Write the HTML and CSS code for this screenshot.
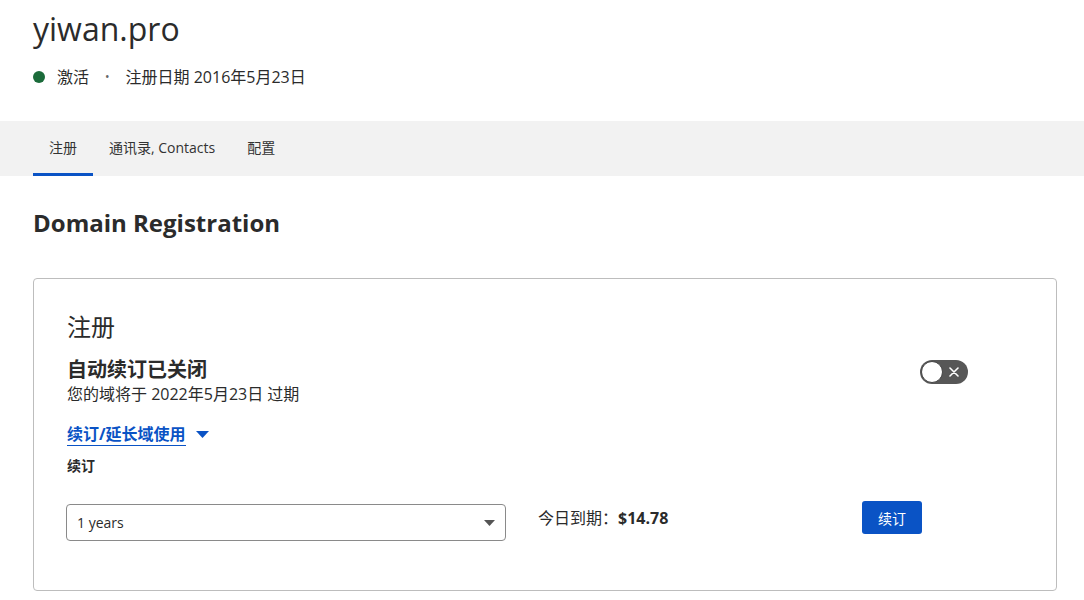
FILE: index.html
```html
<!DOCTYPE html>
<html lang="zh-CN">
<head>
    <meta charset="utf-8">
    <title>yiwan.pro</title>
    <link rel="stylesheet" href="styles.css">
</head>
<body>
    <header class="domain-header">
        <h1 class="domain-name">yiwan.pro</h1>
        <div class="status-row">
            <span class="status-dot"></span>
            <span>激活</span>
            <span class="status-sep">•</span>
            <span>注册日期 2016年5月23日</span>
        </div>
    </header>

    <nav class="tabs">
        <a class="tab active" href="#">注册</a>
        <a class="tab" href="#">通讯录, Contacts</a>
        <a class="tab" href="#">配置</a>
    </nav>

    <main class="content">
        <h2 class="section-title">Domain Registration</h2>

        <section class="card">
            <h3 class="card-title">注册</h3>

            <div class="renew-status">
                <div>
                    <div class="renew-heading">自动续订已关闭</div>
                    <div class="renew-desc">您的域将于 2022年5月23日 过期</div>
                </div>
                <button class="toggle" type="button" aria-label="自动续订">
                    <span class="toggle-knob"></span>
                    <svg class="toggle-x" width="10" height="10" viewBox="0 0 10 10">
                        <path d="M1 1L9 9M9 1L1 9" stroke="#fff" stroke-width="1.6" stroke-linecap="round"/>
                    </svg>
                </button>
            </div>

            <a class="extend-link" href="#">
                <span class="extend-text">续订/延长域使用</span>
                <svg class="extend-caret" width="13" height="7" viewBox="0 0 13 7">
                    <path d="M0 0H13L6.5 7Z" fill="#0a53c5"/>
                </svg>
            </a>

            <div class="field-label">续订</div>

            <div class="renew-row">
                <div class="select-box">
                    <span>1 years</span>
                    <svg width="11" height="6" viewBox="0 0 11 6">
                        <path d="M0 0H11L5.5 6Z" fill="#555"/>
                    </svg>
                </div>
                <div class="price">今日到期：<strong>$14.78</strong></div>
                <button class="btn-primary" type="button">续订</button>
            </div>
        </section>
    </main>
</body>
</html>
```

FILE: styles.css
```css
body {
    margin: 0;
    font-family: "Open Sans", "Noto Sans CJK SC", sans-serif;
    font-size: 16px;
    color: #2b2b2b;
    background: #fff;
}

.domain-header {
    padding: 7px 33px 0;
}

.domain-name {
    margin: 0;
    font-size: 32px;
    font-weight: 400;
    line-height: 44px;
}

.status-row {
    display: flex;
    align-items: center;
    margin-top: 14px;
    line-height: 24px;
}

.status-dot {
    width: 12px;
    height: 12px;
    border-radius: 50%;
    background-color: #1b6b3a;
    margin-right: 12px;
}

.status-sep {
    margin: 0 16px 0 16px;
    font-size: 12px;
    color: #666;
}

.tabs {
    display: flex;
    margin-top: 32px;
    padding-left: 33px;
    height: 55px;
    background-color: #f2f2f2;
}

.tab {
    display: flex;
    align-items: center;
    padding: 0 16px;
    font-size: 14px;
    color: #333;
    text-decoration: none;
    border-bottom: 3px solid transparent;
    padding-top: 0;
}

.tab.active {
    border-bottom-color: #0a53c5;
}

.content {
    padding: 0 27px 0 33px;
}

.section-title {
    margin: 30px 0 0;
    font-size: 24px;
    font-weight: 700;
    line-height: 34px;
}

.card {
    margin-top: 38px;
    border: 1px solid #bdbdbd;
    border-radius: 4px;
    padding: 32px 88px 49px 33px;
}

.card-title {
    margin: 0;
    font-size: 24px;
    font-weight: 400;
    line-height: 32px;
}

.renew-status {
    display: flex;
    justify-content: space-between;
    align-items: flex-start;
    margin-top: 13px;
}

.renew-heading {
    font-size: 20px;
    font-weight: 700;
    line-height: 28px;
}

.renew-desc {
    line-height: 20px;
}

.toggle {
    position: relative;
    width: 48px;
    height: 24px;
    margin-top: 4px;
    padding: 0;
    border: none;
    border-radius: 12px;
    background-color: #575757;
    cursor: pointer;
}

.toggle-knob {
    position: absolute;
    left: 1px;
    top: 1px;
    width: 20px;
    height: 20px;
    border-radius: 50%;
    background-color: #fff;
    border: 1px solid #444;
}

.toggle-x {
    position: absolute;
    right: 9px;
    top: 7px;
}

.extend-link {
    display: inline-flex;
    align-items: center;
    margin-top: 19px;
    text-decoration: none;
    color: #0a53c5;
    font-weight: 700;
    line-height: 24px;
}

.extend-text {
    border-bottom: 1px solid #0a53c5;
    line-height: 22px;
}

.extend-caret {
    margin-left: 10px;
}

.field-label {
    margin-top: 10px;
    font-size: 14px;
    font-weight: 700;
    line-height: 20px;
}

.renew-row {
    display: grid;
    grid-template-columns: 439px 1fr auto;
    column-gap: 32px;
    align-items: start;
    margin-top: 25px;
}

.select-box {
    display: flex;
    justify-content: space-between;
    align-items: center;
    height: 35px;
    margin: 3px 0 0 -1px;
    padding: 0 10px;
    border: 1px solid #8a8a8a;
    border-radius: 4px;
    font-size: 14px;
}

.price {
    margin-top: 7px;
    line-height: 20px;
}

.btn-primary {
    height: 33px;
    padding: 0 16px;
    margin-right: 46px;
    border: none;
    border-radius: 3px;
    background-color: #0a53c5;
    color: #fff;
    font-family: inherit;
    font-size: 14px;
    cursor: pointer;
}
```
